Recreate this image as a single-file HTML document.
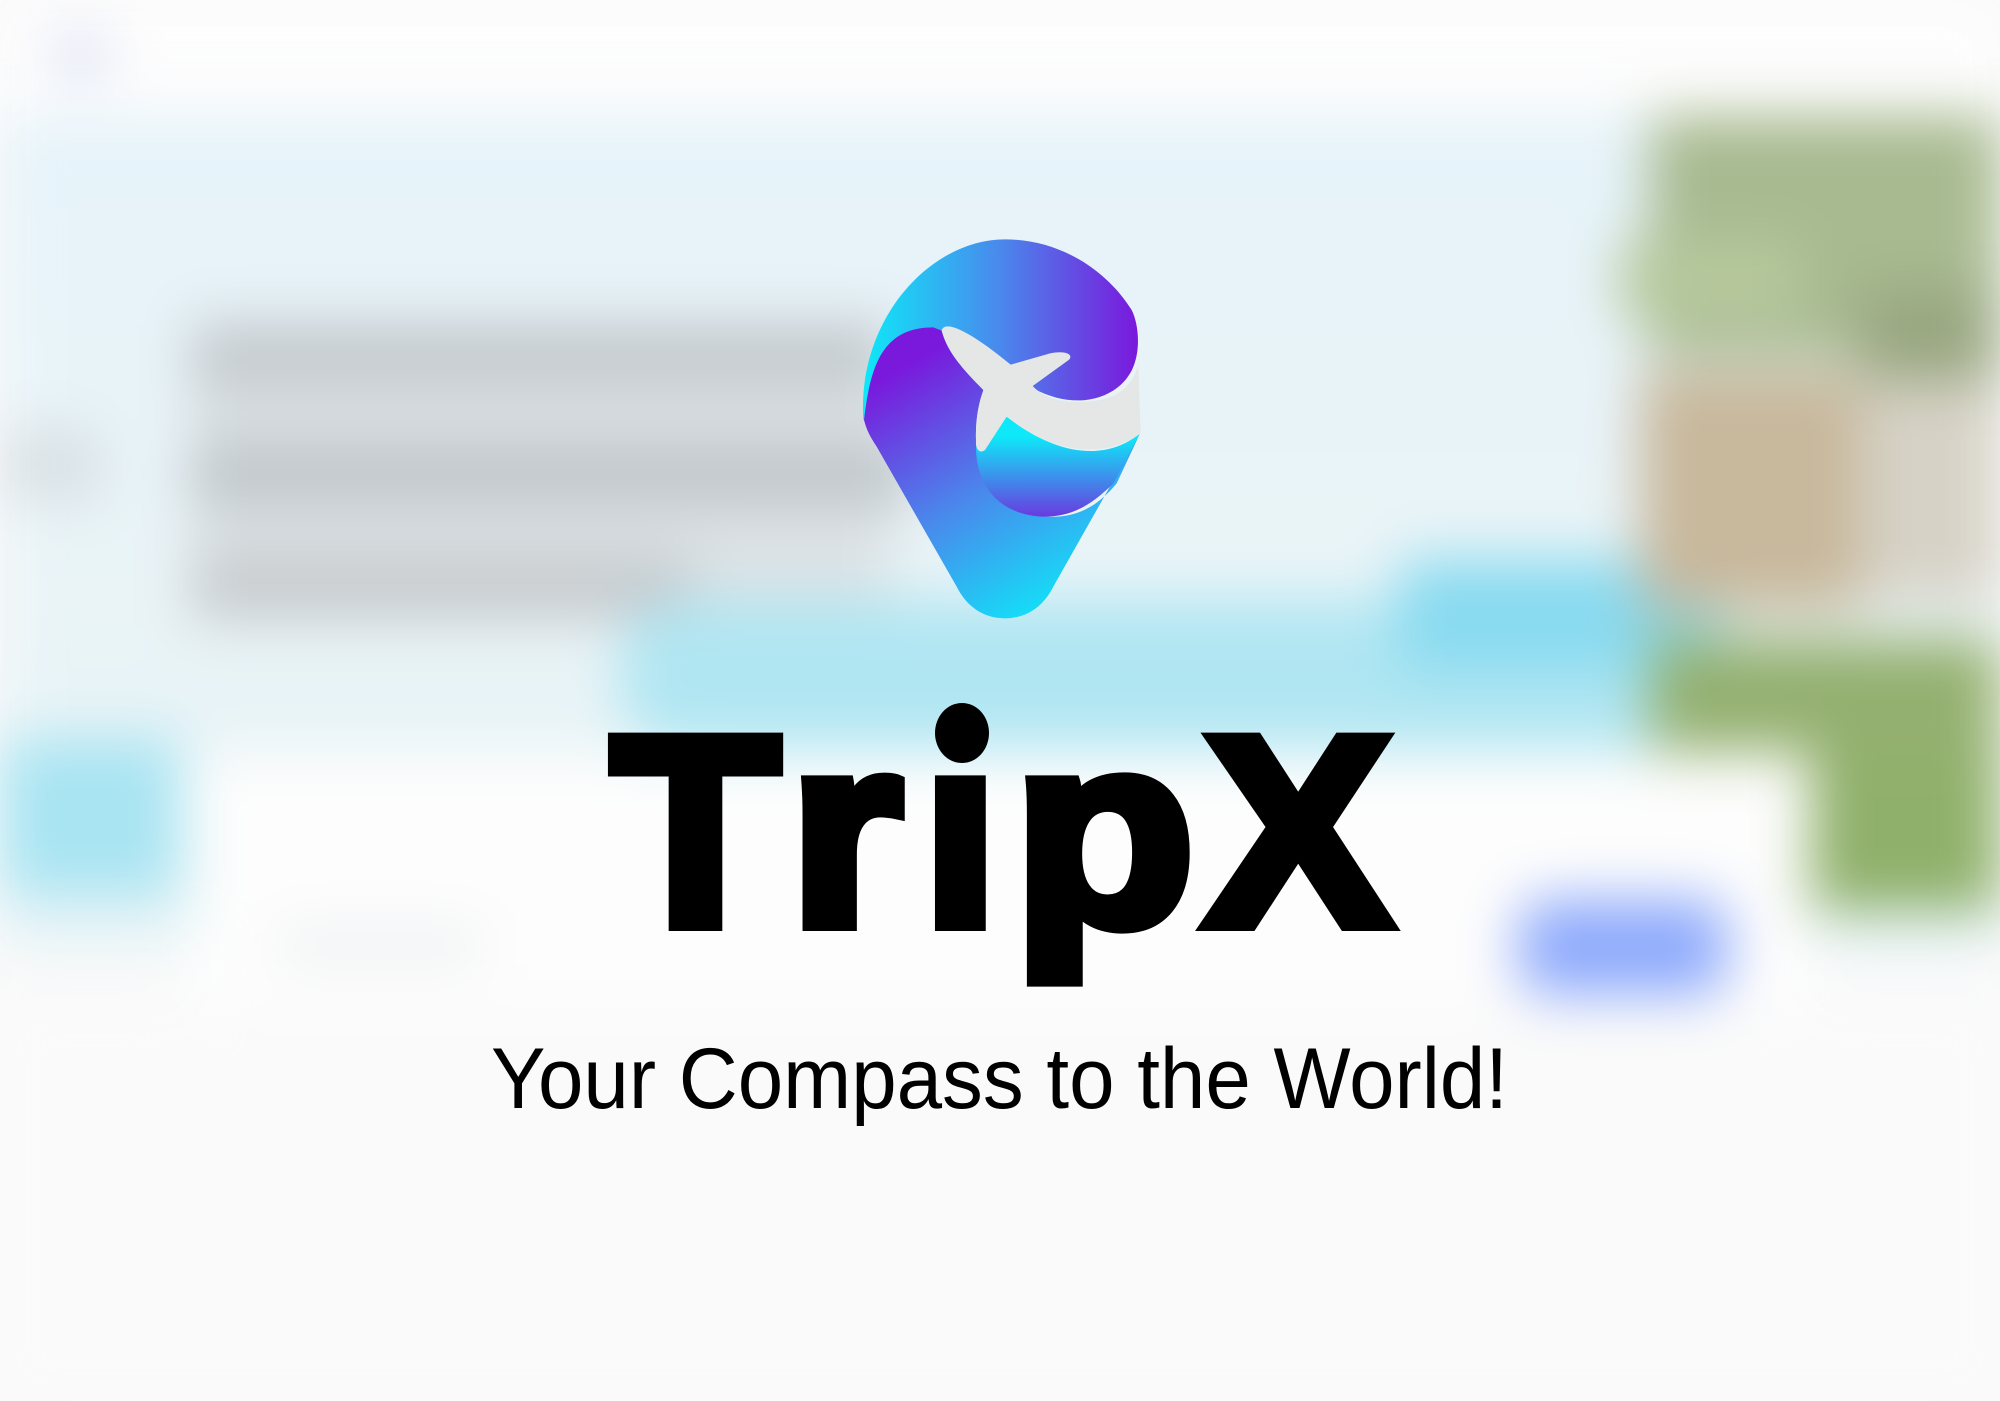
<!DOCTYPE html>
<html><head><meta charset="utf-8"><style>
html,body{margin:0;padding:0;}
body{width:2000px;height:1401px;overflow:hidden;position:relative;background:#fafafa;font-family:"Liberation Sans",sans-serif;}
.bg{position:absolute;inset:0;filter:blur(28px);}
.b{position:absolute;}
.L{font-family:"Liberation Sans",sans-serif;font-weight:bold;font-size:268px;fill:#000;stroke:#000;stroke-width:14px;stroke-linejoin:miter;}
</style></head><body>
<div class="bg">
  <div class="b" style="left:0;top:0;width:2000px;height:115px;background:#fdfdfd"></div>
  <div class="b" style="left:50px;top:35px;width:60px;height:40px;background:#d8dcf4;border-radius:20px"></div>
  <div class="b" style="left:0;top:115px;width:2000px;height:830px;background:linear-gradient(180deg,#e6f3fa,#eaf4f7 60%,#e2f2f6)"></div>
  <div class="b" style="left:191px;top:320px;width:700px;height:300px;background:#dde3e6"></div>
  <div class="b" style="left:191px;top:325px;width:700px;height:65px;background:#c3c9cd"></div>
  <div class="b" style="left:191px;top:440px;width:720px;height:67px;background:#c0c6c9"></div>
  <div class="b" style="left:191px;top:555px;width:500px;height:64px;background:#c6cacd"></div>
  <div class="b" style="left:0;top:430px;width:100px;height:70px;background:#d8e0e4"></div>
  <div class="b" style="left:620px;top:600px;width:1100px;height:150px;background:#b0e6f2;border-radius:60px"></div>
  <div class="b" style="left:1400px;top:560px;width:320px;height:110px;background:#88daf0"></div>
  <div class="b" style="left:1650px;top:115px;width:350px;height:240px;background:#a8ba90"></div>
  <div class="b" style="left:1620px;top:240px;width:180px;height:80px;background:#b6c89c"></div>
  <div class="b" style="left:1640px;top:370px;width:220px;height:240px;background:#c8b89c"></div>
  <div class="b" style="left:1860px;top:380px;width:140px;height:220px;background:#d6d2c6"></div>
  <div class="b" style="left:1860px;top:290px;width:140px;height:90px;background:#98a680"></div>
  <div class="b" style="left:1650px;top:640px;width:350px;height:140px;background:#94b070"></div>
  <div class="b" style="left:1810px;top:760px;width:190px;height:150px;background:#8fb06a"></div>
  <div class="b" style="left:0;top:740px;width:178px;height:153px;background:#a8e4f2"></div>
  <div class="b" style="left:191px;top:752px;width:1620px;height:256px;background:#fdfdfd"></div>
  <div class="b" style="left:1518px;top:899px;width:210px;height:96px;background:#8eaafc;border-radius:30px"></div>
  <div class="b" style="left:280px;top:930px;width:200px;height:30px;background:#eceef0"></div>
  <div class="b" style="left:0;top:1008px;width:2000px;height:393px;background:#fafafa"></div>
</div>

<svg style="position:absolute;left:820px;top:220px" width="340" height="410" viewBox="0 0 1020 1230">
  <defs>
    <linearGradient id="g1" x1="0" y1="0" x2="1" y2="0">
      <stop offset="0" stop-color="#0ee8f8"/><stop offset="0.5" stop-color="#4a88ec"/><stop offset="1" stop-color="#7a18dc"/>
    </linearGradient>
    <linearGradient id="g2" x1="0.2" y1="0.1" x2="0.7" y2="1">
      <stop offset="0" stop-color="#7a18dc"/><stop offset="0.5" stop-color="#4a88ec"/><stop offset="1" stop-color="#0ee8f8"/>
    </linearGradient>
    <linearGradient id="g3" x1="0" y1="0" x2="0" y2="1">
      <stop offset="0.2" stop-color="#0ee8f8"/><stop offset="1" stop-color="#6a3ae0"/>
    </linearGradient>
  </defs>
  <path fill="url(#g1)" d="M130,600 C110,300 330,58 555,58 C720,58 860,150 935,270 C960,320 965,420 920,475 C870,540 760,570 640,505 L300,560 Z"/>
  <path fill="url(#g2)" d="M132,600 C150,450 180,322 340,322 L365,332 C380,390 420,440 490,510 C476,550 466,600 468,660 C470,800 560,880 680,890 C780,895 840,850 890,790 L960,640 L700,1100 C670,1160 620,1195 555,1195 C490,1195 440,1160 410,1100 L170,680 C150,650 140,630 132,600 Z"/>
  <path fill="url(#g3)" d="M560,590 C700,700 850,730 960,640 L880,790 C800,870 740,890 670,890 C540,885 468,800 468,680 Z"/>
  <path fill="#e5e7e7" d="M365,332 C372,300 440,325 572,434 L690,400 C740,390 762,405 746,420 L638,498 C680,545 770,558 860,535 C910,520 945,480 955,430 L962,640 C850,720 700,700 560,590 L495,690 C480,702 466,690 468,660 C466,600 476,550 490,510 C420,440 380,390 365,332 Z"/>
</svg>

<svg style="position:absolute;left:0;top:0" width="2000" height="1401">
  <text class="L" transform="translate(612,924) scale(1.02,1)">T</text>
  <text class="L" transform="translate(790,924) scale(1.07,1)">r</text>
  <text class="L" transform="translate(923,924)">ı</text>
  <text class="L" transform="translate(1014,924) scale(1.1,1)">p</text>
  <text class="L" transform="translate(1206,924) scale(1.03,1)">X</text>
  <ellipse cx="962" cy="733" rx="27" ry="30" fill="#000"/>
  <text x="491" y="1108" font-family="Liberation Sans, sans-serif" font-size="86" textLength="1017" lengthAdjust="spacingAndGlyphs" fill="#000">Your Compass to the World!</text>
</svg>
</body></html>
